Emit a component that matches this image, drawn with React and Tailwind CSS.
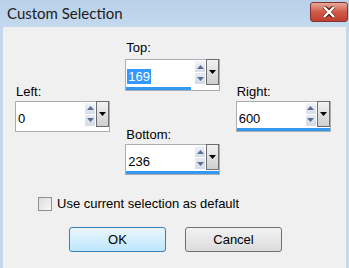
import React from "react";

const ui = { fontFamily: '"Liberation Sans", Arial, sans-serif' };

function SpinBox({ label, value, fill, selected, gap }) {
  return (
    <div className="flex flex-col">
      <div className="text-[13px] leading-[15px] text-black pl-[1px]" style={ui}>
        {label}
      </div>
      <div
        className={
          gap
            ? "mt-[4px] w-[95px] h-[32px] bg-white border border-[#a9aeb5] flex flex-col"
            : "mt-[2px] w-[95px] h-[31px] bg-white border border-[#a9aeb5] flex flex-col"
        }
      >
        <div className="flex h-[26px]">
          <div className="flex-1 pl-[1px] pt-[3px]">
            <span
              className={
                selected
                  ? "text-[13px] leading-[15px] bg-[#3399ff] text-white px-[1px]"
                  : "text-[13px] leading-[15px] text-black px-[1px]"
              }
              style={ui}
            >
              {value}
            </span>
          </div>
          <div className="w-[10px] flex flex-col gap-[1px] pt-[1px] mr-[1px]">
            <div className="h-[11px] bg-gradient-to-b from-[#f1f4f8] to-[#d5dde8] flex items-center justify-center">
              <svg width="7" height="4" viewBox="0 0 7 4">
                <path d="M0 4 L3.5 0 L7 4 Z" fill="#5a6f92" />
              </svg>
            </div>
            <div className="h-[11px] bg-gradient-to-b from-[#e6ebf2] to-[#d3dbe6] flex items-center justify-center">
              <svg width="7" height="4" viewBox="0 0 7 4">
                <path d="M0 0 L3.5 4 L7 0 Z" fill="#5a6f92" />
              </svg>
            </div>
          </div>
          <div className="w-[13px] h-[26px] -mt-[1px] border border-[#6d6d6d] bg-gradient-to-b from-[#f2f2f2] to-[#cfcfcf] flex items-center justify-center">
            <svg width="7" height="4" viewBox="0 0 7 4">
              <path d="M0 0 L3.5 4 L7 0 Z" fill="#000" />
            </svg>
          </div>
        </div>
        <div className="flex-1 flex items-end">
          <div className="h-[3px] bg-[#3598f0]" style={{ width: `${fill}%` }} />
        </div>
      </div>
    </div>
  );
}

export default function App() {
  return (
    <div className="w-[349px] h-[268px] flex flex-col bg-[#c4d7ec] overflow-hidden">
      {/* Title bar */}
      <div className="h-[27px] flex items-center justify-between bg-gradient-to-b from-[#b8d0e9] to-[#c5d9ee] pl-[7px] pr-[1px]">
        <span
          className="text-[15px] text-[#1b1b1b]"
          style={{ fontFamily: 'Lato, "Noto Sans", sans-serif' }}
        >
          Custom Selection
        </span>
        <div className="w-[38px] h-[20px] mb-[3px] rounded-[3px] border border-[#83342a] bg-gradient-to-b from-[#e6a89a] via-[#cf5a48] to-[#c13e2e] flex items-center justify-center">
          <svg width="14" height="12" viewBox="0 0 14 12">
            <path
              d="M2 1 L7 5 L12 1 M2 11 L7 7 L12 11"
              stroke="#5c1f17"
              strokeWidth="4"
              fill="none"
            />
            <path
              d="M2 1 L12 11 M12 1 L2 11"
              stroke="#fff"
              strokeWidth="2.4"
              fill="none"
            />
          </svg>
        </div>
      </div>

      {/* Body */}
      <div className="flex-1 mx-[3px] bg-[#f0f0f0] flex flex-col">
        <div className="flex items-center pl-[12px] pt-[13px]">
          <div className="w-[112px]">
            <SpinBox label="Left:" value="0" fill={0} />
          </div>
          <div className="w-[112px] flex flex-col">
            <SpinBox label="Top:" value="169" fill={70} selected gap />
            <div className="mt-[36px]">
              <SpinBox label="Bottom:" value="236" fill={100} />
            </div>
          </div>
          <div className="w-[112px]">
            <SpinBox label="Right:" value="600" fill={100} />
          </div>
        </div>

        {/* Checkbox */}
        <div className="flex items-center ml-[35px] mt-[21px] gap-[5px]">
          <div className="w-[14px] h-[14px] border border-[#8e8f8f] bg-gradient-to-br from-[#dcdcdc] to-[#f8f8f8]" />
          <span className="text-[13px] leading-[15px] text-black" style={ui}>
            Use current selection as default
          </span>
        </div>

        {/* Buttons */}
        <div className="flex ml-[66px] mt-[16px] gap-[19px]">
          <button
            className="w-[97px] h-[25px] rounded-[3px] border border-[#3c7fb1] bg-gradient-to-b from-[#eaf6fd] to-[#bee6fd] text-[13px] text-black"
            style={ui}
          >
            OK
          </button>
          <button
            className="w-[97px] h-[25px] rounded-[3px] border border-[#707070] bg-gradient-to-b from-[#f2f2f2] to-[#dcdcdc] text-[13px] text-black"
            style={ui}
          >
            Cancel
          </button>
        </div>
      </div>
    </div>
  );
}
